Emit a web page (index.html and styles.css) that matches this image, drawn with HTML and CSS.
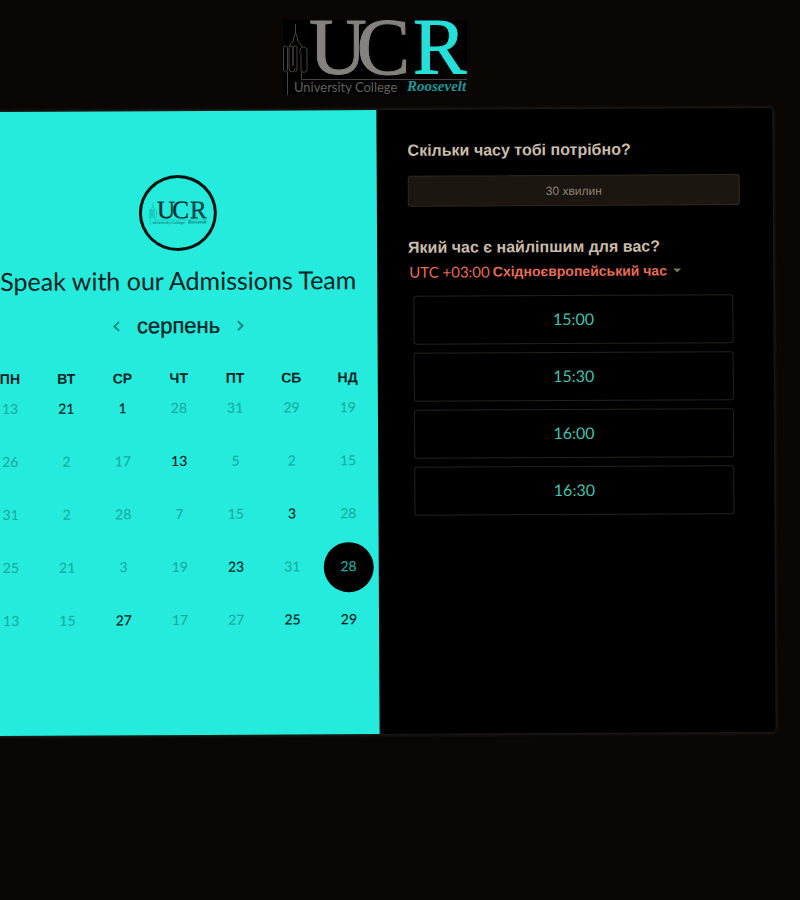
FILE: index.html
```html
<!DOCTYPE html>
<html lang="uk">
<head>
<meta charset="utf-8">
<title>Speak with our Admissions Team</title>
<link rel="stylesheet" href="styles.css">
</head>
<body>
<svg class="sprite" aria-hidden="true">
  <symbol id="logo" viewBox="0 0 184 75">
    <g fill="none" stroke="currentColor" stroke-width="1">
      <path class="tower" d="M12.500 4v9M10.500 18l2-5 2 5M10.500 18v3q-4 2-4 6M14.500 18v3q4 2 4 6"/>
      <rect class="tower" x="0.500" y="26" width="4" height="26" rx="2"/>
      <path class="tower" d="M6 48V28q0-2 2-2t2 2v18M6 48q0 4 3 4t3-4M10 46V28q0-2 2-2t2 2v20q0 4-2 4"/>
      <path class="tower" d="M17 33v-4q3-4 7 0v22q-3 3-6 0V33"/>
      <path class="tower" d="M4.500 52v23M18.500 52v7.500H184"/>
    </g>
    <text class="logo-big" x="26" y="54">U<tspan dx="-10">C</tspan></text>
    <text class="logo-big logo-r" x="130" y="54">R</text>
    <text class="logo-sub" x="11" y="72">University College</text>
    <text class="logo-roo" x="124" y="71">Roosevelt</text>
  </symbol>
</svg>
<header class="top">
  <svg class="logo" role="img" aria-label="University College Roosevelt"><use href="#logo"/></svg>
</header>
<main class="stage">
  <div class="card">
    <section class="calendar">
      <div class="avatar"><svg class="avatar-logo" aria-hidden="true"><use href="#logo"/></svg></div>
      <h1 class="title">Speak with our Admissions Team</h1>
      <div class="month">
        <button class="arrow" aria-label="Попередній місяць"><svg viewBox="0 0 8 12"><path d="M6.500 1.500 2 6l4.500 4.500"/></svg></button>
        <h2 class="month-name">серпень</h2>
        <button class="arrow" aria-label="Наступний місяць"><svg viewBox="0 0 8 12"><path d="M1.500 1.500 6 6l-4.500 4.500"/></svg></button>
      </div>
      <div class="week names"><span>ПН</span><span>ВТ</span><span>СР</span><span>ЧТ</span><span>ПТ</span><span>СБ</span><span>НД</span></div>
      <div class="week days">
        <button disabled>13</button><button>21</button><button>1</button><button disabled>28</button><button disabled>31</button><button disabled>29</button><button disabled>19</button>
        <button disabled>26</button><button disabled>2</button><button disabled>17</button><button>13</button><button disabled>5</button><button disabled>2</button><button disabled>15</button>
        <button disabled>31</button><button disabled>2</button><button disabled>28</button><button disabled>7</button><button disabled>15</button><button>3</button><button disabled>28</button>
        <button disabled>25</button><button disabled>21</button><button disabled>3</button><button disabled>19</button><button>23</button><button disabled>31</button><button class="selected" aria-pressed="true">28</button>
        <button disabled>13</button><button disabled>15</button><button>27</button><button disabled>17</button><button disabled>27</button><button>25</button><button>29</button>
      </div>
    </section>
    <section class="times">
      <h2 class="question">Скільки часу тобі потрібно?</h2>
      <button class="duration">30 хвилин</button>
      <h2 class="question">Який час є найліпшим для вас?</h2>
      <button class="zone"><span class="utc">UTC +03:00</span> <span class="zone-name">Східноєвропейський час</span><span class="caret"></span></button>
      <div class="slots">
        <button class="slot">15:00</button>
        <button class="slot">15:30</button>
        <button class="slot">16:00</button>
        <button class="slot">16:30</button>
      </div>
    </section>
  </div>
</main>
</body>
</html>
```
FILE: styles.css
```css
* { box-sizing: border-box; }
body {
  margin: 0;
  min-height: 100vh;
  background: #0a0603;
  font-family: "Liberation Sans", sans-serif;
  overflow-x: hidden;
}
h1, h2 { margin: 0; font-weight: 400; }
button { font: inherit; padding: 0; border: 0; background: none; color: inherit; cursor: pointer; }
.sprite { position: absolute; width: 0; height: 0; }

.top { height: 110px; padding: 20px 50px 0 0; text-align: center; }
.logo { width: 184px; height: 75px; background: #000; color: #63625e; --r: #25dfd8; --roo: #1c9c98; --tower: #45433f; }
.tower { stroke: var(--tower); }
.logo-big { font-family: "Liberation Serif", serif; font-size: 80px; fill: var(--letters, #83827e); stroke: var(--letters, #83827e); stroke-width: 1px; }
.logo-r { fill: var(--r); stroke: var(--r); }
.logo-sub { font-family: Lato, sans-serif; font-size: 13px; fill: currentColor; }
.logo-roo { font-family: "Liberation Serif", serif; font-size: 15px; font-style: italic; font-weight: 700; fill: var(--roo); }

.stage { padding-right: 26px; }
.card {
  display: grid;
  grid-template-columns: 1fr 1fr;
  margin-left: -18px;
  min-height: 624px;
  border-radius: 4px;
  background: #000;
  box-shadow: 0 0 4px #35332f;
  transform: rotate(-0.3deg);
}
.calendar { padding: 64px 2px 0 0; background: #24ebdc; color: #06211f; }
.avatar {
  display: grid;
  place-items: center;
  width: 78px;
  height: 76px;
  margin: 0 auto;
  border: 3px solid #04110f;
  border-radius: 50%;
}
.avatar-logo { width: 58px; height: 24px; color: #0b6d68; --letters: #0a2d30; --r: #0a4345; --roo: #0b6d68; --tower: #0b8f88; }
.title {
  margin-top: 14px;
  font: 400 25px/30px Lato, sans-serif;
  text-align: center;
  white-space: nowrap;
}
.month { display: flex; justify-content: center; align-items: center; gap: 16px; height: 30px; margin-top: 16px; }
.month-name { font-size: 22px; line-height: 30px; -webkit-text-stroke: 0.3px #06211f; }
.arrow { display: flex; }
.arrow svg { width: 8px; height: 12px; fill: none; stroke: #168a82; stroke-width: 2; }
.week { display: grid; grid-template-columns: repeat(7, 1fr); justify-items: center; }
.names { margin-top: 31px; font-size: 14px; font-weight: 700; line-height: 12px; }
.days { row-gap: 3px; font: 500 14px/20px Lato, sans-serif; color: #041a18; }
.days button { width: 50px; height: 50px; padding-bottom: 2px; border-radius: 50%; }
.days button:disabled { color: #18aca3; }
.days .selected { background: #000; color: #27aaa2; }

.times { padding: 31px 33px 32px 31px; }
.question { font-size: 16px; font-weight: 700; line-height: 20px; color: #c9bca9; }
.duration {
  display: block;
  width: 100%;
  height: 31px;
  margin: 15px 0 31px;
  border: 1px solid #30281e;
  border-radius: 3px;
  background: #1b1610;
  color: #8f8475;
  font-size: 12px;
}
.zone { display: flex; align-items: center; gap: 3px; height: 20px; margin: 4px 0 14px 1px; color: #e66d58; font-size: 14px; }
.utc { font-family: Lato, sans-serif; font-size: 15px; }
.zone-name { font-weight: 700; }
.caret { margin-left: 3px; border: 4px solid transparent; border-top-color: #7b7062; border-bottom: 0; }
.slots { display: grid; gap: 8px; margin: 0 7px 0 5px; }
.slot {
  height: 49px;
  padding-bottom: 2px;
  border: 1px solid #24211d;
  border-radius: 3px;
  color: #45c3ab;
  font: 400 16px/20px Lato, sans-serif;
}
```
